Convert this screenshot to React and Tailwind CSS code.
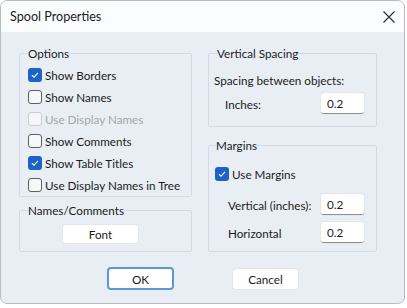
import React from 'react';

const font = { fontFamily: 'Lato, "Noto Sans", sans-serif' };

function Check({ checked, disabled, label }) {
	return (
		<div className="flex items-center h-[22px] whitespace-nowrap">
			{checked ? (
				<span className="w-[14px] h-[14px] shrink-0 rounded-[3px] bg-[#1b63c6] flex items-center justify-center">
					<svg width="10" height="10" viewBox="0 0 10 10">
						<path d="M2 5.2 L4 7.2 L8 2.8" fill="none" stroke="#ffffff" strokeWidth="1.2" />
					</svg>
				</span>
			) : (
				<span
					className={
						disabled
							? 'w-[14px] h-[14px] shrink-0 rounded-[3px] border border-[#c9ccd1] bg-[#f4f6f9]'
							: 'w-[14px] h-[14px] shrink-0 rounded-[3px] border border-[#5c5f63] bg-[#f7f8fa]'
					}
				></span>
			)}
			<span className={disabled ? 'ml-[3px] text-[#a3a6ab]' : 'ml-[3px] text-[#1b1b1b]'}>{label}</span>
		</div>
	);
}

function Field({ value }) {
	return (
		<div className="w-[43px] h-[21px] bg-white rounded-[3px] border-b border-[#8c8f94] shadow-[0_0_0_1px_#e3e6ea] flex items-center pl-[6px] text-[#1b1b1b]">
			{value}
		</div>
	);
}

export default function App() {
	return (
		<div className="w-[407px] h-[308px] bg-white text-[11.7px] leading-[16px]" style={font}>
			<div className="w-[405px] h-[304px] rounded-[7px] border border-[#b9bdc3] overflow-hidden bg-[#e9eef5] flex flex-col">
				<div className="h-[31px] bg-[#fbfcfe] flex items-center justify-between pl-[9px] pr-[9px] shrink-0">
					<span className="text-[12.6px] text-[#1b1b1b]">Spool Properties</span>
					<svg width="12" height="12" viewBox="0 0 12 12">
						<path d="M0.5 0.5 L11.5 11.5 M11.5 0.5 L0.5 11.5" stroke="#2b2b2b" strokeWidth="1.1" />
					</svg>
				</div>

				<div className="flex pt-[13px] pl-[18px]">
					<div className="w-[173px] flex flex-col">
						<fieldset className="border border-[#d5dae2] rounded-[2px] pl-[8px] pt-[3px] h-[152px]">
							<legend className="text-[#1b1b1b]">Options</legend>
							<Check checked label="Show Borders" />
							<Check label="Show Names" />
							<Check disabled label="Use Display Names" />
							<Check label="Show Comments" />
							<Check checked label="Show Table Titles" />
							<Check label="Use Display Names in Tree" />
						</fieldset>
						<fieldset className="mt-[5px] border border-[#d5dae2] rounded-[2px] pl-[8px] pt-[7px] h-[50px]">
							<legend className="text-[#1b1b1b]">Names/Comments</legend>
							<button className="ml-[35px] w-[75px] h-[18px] bg-white rounded-[3px] shadow-[0_0_0_1px_#e4e7eb] text-[#1b1b1b] leading-[18px]">
								Font
							</button>
						</fieldset>
					</div>

					<div className="w-[169px] ml-[16px] flex flex-col">
						<fieldset className="border border-[#d5dae2] rounded-[2px] pl-[5px] pr-[12px] pt-[11px] h-[82px]">
							<legend className="ml-[3px] text-[#1b1b1b]">Vertical Spacing</legend>
							<div className="text-[#1b1b1b]">Spacing between objects:</div>
							<div className="mt-[5px] flex items-center justify-between">
								<span className="ml-[11px] text-[#1b1b1b]">Inches:</span>
								<Field value="0.2" />
							</div>
						</fieldset>
						<fieldset className="mt-[10px] border border-[#d5dae2] rounded-[2px] pl-[6px] pr-[12px] pt-[10px] h-[115px]">
							<legend className="ml-[1px] text-[#1b1b1b]">Margins</legend>
							<Check checked label="Use Margins" />
							<div className="mt-[9px] flex items-center justify-between">
								<span className="ml-[13px] text-[#1b1b1b]">Vertical (inches):</span>
								<Field value="0.2" />
							</div>
							<div className="mt-[7px] flex items-center justify-between">
								<span className="ml-[13px] text-[#1b1b1b]">Horizontal</span>
								<Field value="0.2" />
							</div>
						</fieldset>
					</div>
				</div>

				<div className="flex items-center pt-[15px] pl-[106px]">
					<button className="w-[67px] h-[23px] bg-white rounded-[4px] border-2 border-[#5b98d6] text-[#1b1b1b]">
						OK
					</button>
					<button className="ml-[59px] w-[65px] h-[20px] bg-white rounded-[3px] shadow-[0_0_0_1px_#e2e5e9] text-[#1b1b1b]">
						Cancel
					</button>
				</div>
			</div>
		</div>
	);
}
